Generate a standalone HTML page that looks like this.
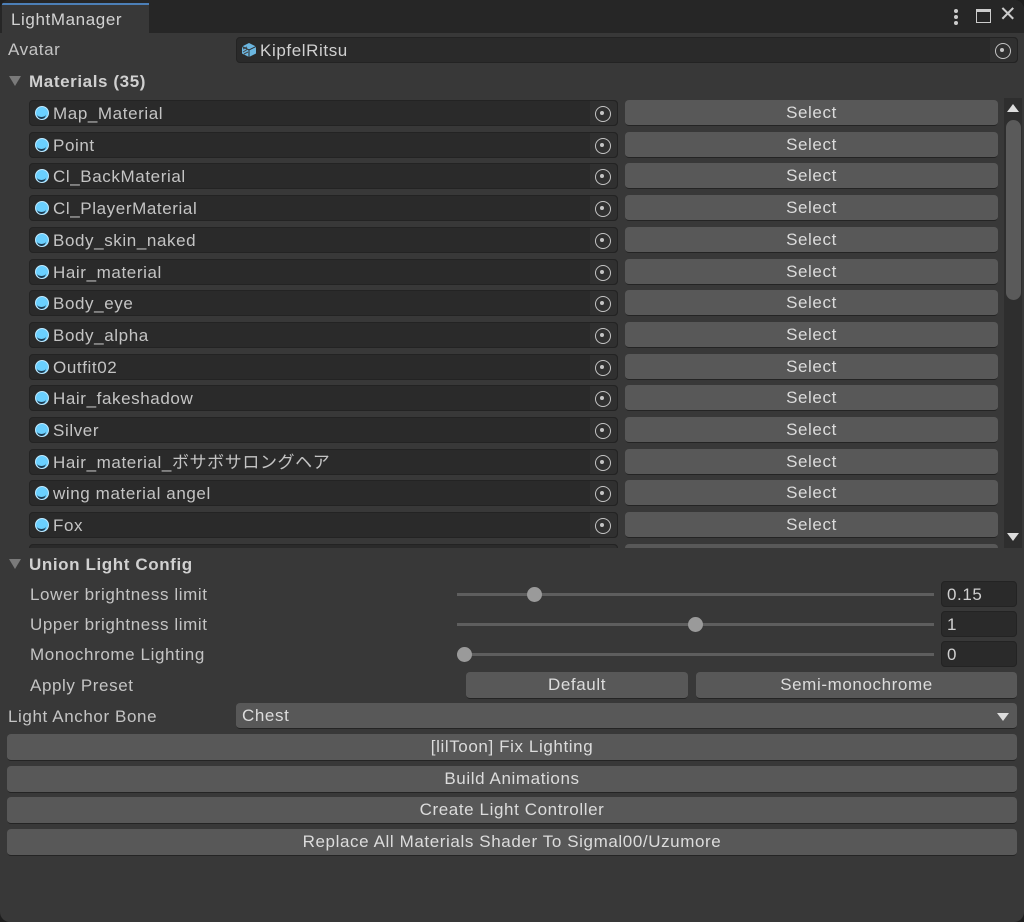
<!DOCTYPE html>
<html><head><meta charset="utf-8"><style>
*{box-sizing:border-box;margin:0;padding:0}
body{width:1024px;height:922px;background:#1e1e1e;font-family:"Liberation Sans","Noto Sans CJK JP",sans-serif;color:#c4c4c4;font-size:17px;letter-spacing:0.6px;position:relative;overflow:hidden}
.win{position:absolute;left:0;top:0;width:1024px;height:922px;background:#383838;border-radius:10px;overflow:hidden}
.tabbar{position:absolute;left:0;top:0;width:1024px;height:33px;background:#262626}
.tab{position:absolute;left:2px;top:3px;width:147px;height:31px;background:#383838;border-top:2px solid #4c7fb7;padding:5px 0 0 9px;color:#d2d2d2;line-height:20px}
.a{position:absolute}
.t{position:absolute;white-space:nowrap;line-height:20px}
.field{position:absolute;background:#2a2a2a;border-radius:4px;border:1px solid #232323}
.pick{position:absolute;right:0;top:0;bottom:0;width:27px;background:#303030;border-radius:0 4px 4px 0}
.pick:after{content:"";position:absolute;left:5px;top:5px;width:14px;height:14px;border:1.6px solid #c4c4c4;border-radius:50%}
.pick:before{content:"";position:absolute;left:10px;top:10px;width:4px;height:4px;background:#c4c4c4;border-radius:50%;z-index:1}
.btn{position:absolute;background:#585858;border-radius:4px;border-bottom:1px solid #242424;text-align:center;color:#dcdcdc;line-height:25px}
.mat{position:absolute;left:31px;top:6px;width:14px;height:14px;border-radius:50%;background:#6ad0ff;border:1.5px solid #bfe9ff}
.mat:after{content:"";position:absolute;left:1px;top:4px;width:9px;height:6px;border-bottom:2px solid #1d3a50;border-radius:0 0 6px 6px}
.row{position:absolute;left:0;width:1000px;height:26px}
.row .t{top:4px}
.tri{position:absolute;width:0;height:0;border-left:6px solid transparent;border-right:6px solid transparent;border-top:10px solid #7a7a7a}
.track{position:absolute;left:457px;width:477px;height:3px;background:#5e5e5e}
.thumb{position:absolute;width:15px;height:15px;border-radius:50%;background:#9a9a9a}
.num{position:absolute;left:941px;width:76px;height:26px;background:#2a2a2a;border:1px solid #232323;border-radius:4px;padding:3px 0 0 5px;color:#d0d0d0;line-height:20px}
</style></head><body>
<div class="win">
<div class="tabbar"><div class="tab">LightManager</div>
<div class="a" style="left:954px;top:9px;width:4px;height:4px;background:#ccc;border-radius:50%"></div>
<div class="a" style="left:954px;top:15px;width:4px;height:4px;background:#ccc;border-radius:50%"></div>
<div class="a" style="left:954px;top:21px;width:4px;height:4px;background:#ccc;border-radius:50%"></div>
<div class="a" style="left:976px;top:9px;width:15px;height:14px;border:1.5px solid #ccc;border-top:3px solid #ccc"></div>
<div class="t" style="left:999px;top:5px;font-size:21px;color:#ccc">✕</div>
</div>
<div class="t" style="left:8px;top:40px">Avatar</div>
<div class="field" style="left:236px;top:37px;width:782px;height:26px"><div class="pick"></div>
<svg class="a" style="left:4px;top:4px" width="16" height="16" viewBox="0 0 16 16"><path d="M8 1L15 4.5V11.5L8 15L1 11.5V4.5Z" fill="#6bb6e0"/><path d="M1 4.5L8 8L15 4.5M8 8V15" stroke="#2a2a2a" stroke-width="1" fill="none"/><path d="M2 7l4 -2M2 10l5 -3M3 12l4 -2" stroke="#444" stroke-width="1"/></svg>
<div class="t" style="left:23px;top:3px;color:#d0d0d0">KipfelRitsu</div></div>
<div class="tri" style="left:9px;top:76px"></div>
<div class="t" style="left:29px;top:72px;font-weight:bold;color:#d0d0d0">Materials (35)</div>

<div class="a" style="left:0;top:98px;width:1003px;height:450px;overflow:hidden">
<div class="row" style="top:2px"><div class="field" style="left:29px;width:589px;height:26px"><div class="pick"></div></div><div class="mat" style="left:35px"></div><div class="t" style="left:53px">Map_Material</div><div class="btn" style="left:625px;width:373px;height:26px">Select</div></div>
<div class="row" style="top:33.7px"><div class="field" style="left:29px;width:589px;height:26px"><div class="pick"></div></div><div class="mat" style="left:35px"></div><div class="t" style="left:53px">Point</div><div class="btn" style="left:625px;width:373px;height:26px">Select</div></div>
<div class="row" style="top:65.4px"><div class="field" style="left:29px;width:589px;height:26px"><div class="pick"></div></div><div class="mat" style="left:35px"></div><div class="t" style="left:53px">Cl_BackMaterial</div><div class="btn" style="left:625px;width:373px;height:26px">Select</div></div>
<div class="row" style="top:97.1px"><div class="field" style="left:29px;width:589px;height:26px"><div class="pick"></div></div><div class="mat" style="left:35px"></div><div class="t" style="left:53px">Cl_PlayerMaterial</div><div class="btn" style="left:625px;width:373px;height:26px">Select</div></div>
<div class="row" style="top:128.8px"><div class="field" style="left:29px;width:589px;height:26px"><div class="pick"></div></div><div class="mat" style="left:35px"></div><div class="t" style="left:53px">Body_skin_naked</div><div class="btn" style="left:625px;width:373px;height:26px">Select</div></div>
<div class="row" style="top:160.5px"><div class="field" style="left:29px;width:589px;height:26px"><div class="pick"></div></div><div class="mat" style="left:35px"></div><div class="t" style="left:53px">Hair_material</div><div class="btn" style="left:625px;width:373px;height:26px">Select</div></div>
<div class="row" style="top:192.2px"><div class="field" style="left:29px;width:589px;height:26px"><div class="pick"></div></div><div class="mat" style="left:35px"></div><div class="t" style="left:53px">Body_eye</div><div class="btn" style="left:625px;width:373px;height:26px">Select</div></div>
<div class="row" style="top:223.9px"><div class="field" style="left:29px;width:589px;height:26px"><div class="pick"></div></div><div class="mat" style="left:35px"></div><div class="t" style="left:53px">Body_alpha</div><div class="btn" style="left:625px;width:373px;height:26px">Select</div></div>
<div class="row" style="top:255.6px"><div class="field" style="left:29px;width:589px;height:26px"><div class="pick"></div></div><div class="mat" style="left:35px"></div><div class="t" style="left:53px">Outfit02</div><div class="btn" style="left:625px;width:373px;height:26px">Select</div></div>
<div class="row" style="top:287.3px"><div class="field" style="left:29px;width:589px;height:26px"><div class="pick"></div></div><div class="mat" style="left:35px"></div><div class="t" style="left:53px">Hair_fakeshadow</div><div class="btn" style="left:625px;width:373px;height:26px">Select</div></div>
<div class="row" style="top:319px"><div class="field" style="left:29px;width:589px;height:26px"><div class="pick"></div></div><div class="mat" style="left:35px"></div><div class="t" style="left:53px">Silver</div><div class="btn" style="left:625px;width:373px;height:26px">Select</div></div>
<div class="row" style="top:350.7px"><div class="field" style="left:29px;width:589px;height:26px"><div class="pick"></div></div><div class="mat" style="left:35px"></div><div class="t" style="left:53px">Hair_material_ボサボサロングヘア</div><div class="btn" style="left:625px;width:373px;height:26px">Select</div></div>
<div class="row" style="top:382.4px"><div class="field" style="left:29px;width:589px;height:26px"><div class="pick"></div></div><div class="mat" style="left:35px"></div><div class="t" style="left:53px">wing material angel</div><div class="btn" style="left:625px;width:373px;height:26px">Select</div></div>
<div class="row" style="top:414.1px"><div class="field" style="left:29px;width:589px;height:26px"><div class="pick"></div></div><div class="mat" style="left:35px"></div><div class="t" style="left:53px">Fox</div><div class="btn" style="left:625px;width:373px;height:26px">Select</div></div>
<div class="row" style="top:445.8px"><div class="field" style="left:29px;width:589px;height:26px"><div class="pick"></div></div><div class="btn" style="left:625px;width:373px;height:26px"></div></div>
</div>
<div class="a" style="left:1004px;top:98px;width:18px;height:450px;background:#2e2e2e"></div>
<div class="a" style="left:1007px;top:104px;width:0;height:0;border-left:6px solid transparent;border-right:6px solid transparent;border-bottom:8px solid #ddd"></div>
<div class="a" style="left:1006px;top:120px;width:15px;height:180px;background:#5a5a5a;border-radius:8px"></div>
<div class="a" style="left:1007px;top:533px;width:0;height:0;border-left:6px solid transparent;border-right:6px solid transparent;border-top:8px solid #ddd"></div>

<div class="tri" style="left:9px;top:559px"></div>
<div class="t" style="left:29px;top:555px;font-weight:bold;color:#d0d0d0">Union Light Config</div>
<div class="t" style="left:30px;top:585px">Lower brightness limit</div>
<div class="t" style="left:30px;top:615px">Upper brightness limit</div>
<div class="t" style="left:30px;top:645px">Monochrome Lighting</div>
<div class="t" style="left:30px;top:676px">Apply Preset</div>
<div class="track" style="top:593px"></div><div class="thumb" style="left:527px;top:587px"></div>
<div class="track" style="top:623px"></div><div class="thumb" style="left:688px;top:617px"></div>
<div class="track" style="top:653px"></div><div class="thumb" style="left:457px;top:647px"></div>
<div class="num" style="top:581px">0.15</div>
<div class="num" style="top:611px">1</div>
<div class="num" style="top:641px">0</div>
<div class="btn" style="left:466px;top:672px;width:222px;height:27px">Default</div>
<div class="btn" style="left:696px;top:672px;width:321px;height:27px">Semi-monochrome</div>
<div class="t" style="left:8px;top:707px">Light Anchor Bone</div>
<div class="btn" style="left:236px;top:703px;width:781px;height:26px;text-align:left;padding-left:6px">Chest</div>
<div class="a" style="left:997px;top:713px;width:0;height:0;border-left:6px solid transparent;border-right:6px solid transparent;border-top:8px solid #ddd"></div>
<div class="btn" style="left:7px;top:734px;width:1010px;height:27px">[lilToon] Fix Lighting</div>
<div class="btn" style="left:7px;top:766px;width:1010px;height:27px">Build Animations</div>
<div class="btn" style="left:7px;top:797px;width:1010px;height:27px">Create Light Controller</div>
<div class="btn" style="left:7px;top:829px;width:1010px;height:27px">Replace All Materials Shader To Sigmal00/Uzumore</div>
</div>
</body></html>
